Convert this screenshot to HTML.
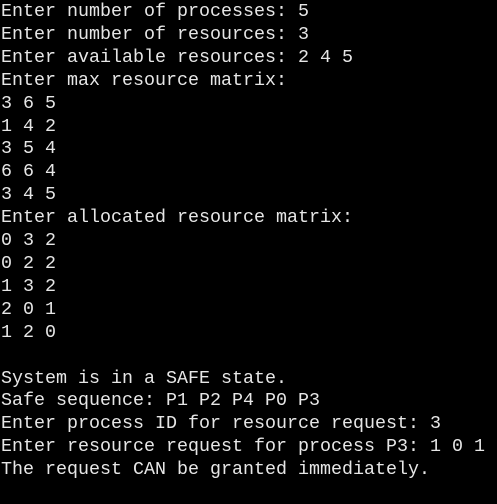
<!DOCTYPE html>
<html><head><style>
html,body{margin:0;padding:0;background:#000;width:497px;height:504px;overflow:hidden}
pre{margin:0;position:absolute;left:1px;top:1px;font-family:"Liberation Mono",monospace;font-size:18.33px;line-height:22.9px;color:#e6e6e6;}
</style></head><body><pre>Enter number of processes: 5
Enter number of resources: 3
Enter available resources: 2 4 5
Enter max resource matrix:
3 6 5
1 4 2
3 5 4
6 6 4
3 4 5
Enter allocated resource matrix:
0 3 2
0 2 2
1 3 2
2 0 1
1 2 0

System is in a SAFE state.
Safe sequence: P1 P2 P4 P0 P3
Enter process ID for resource request: 3
Enter resource request for process P3: 1 0 1
The request CAN be granted immediately.</pre></body></html>
